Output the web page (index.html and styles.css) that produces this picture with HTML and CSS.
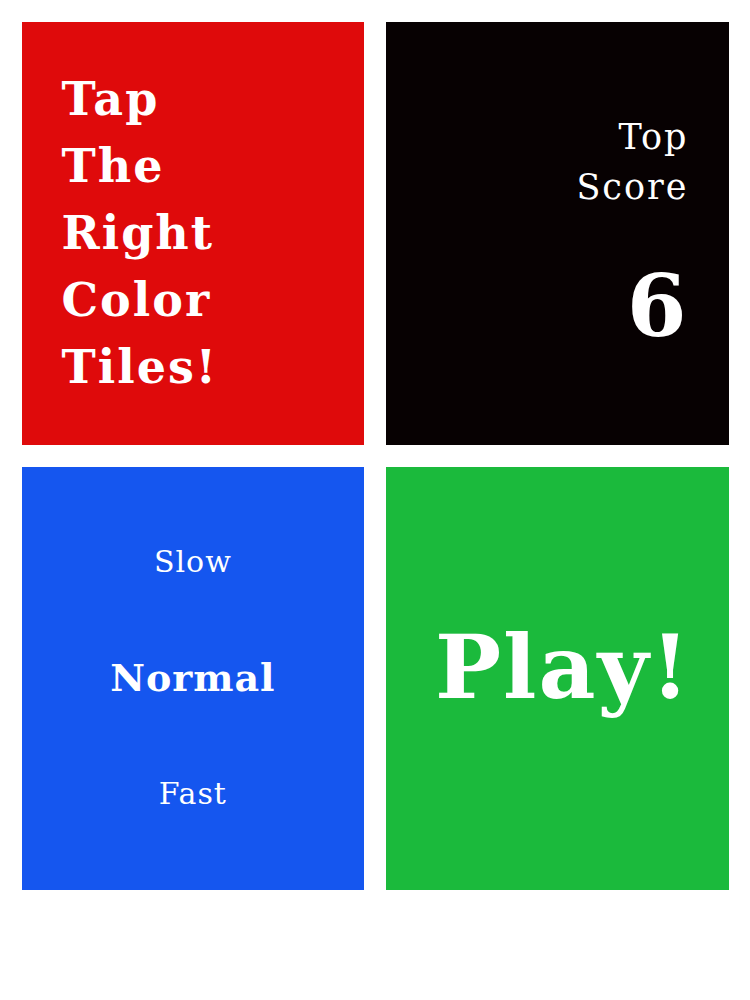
FILE: index.html
```html
<!DOCTYPE html>
<html lang="en">
<head>
<meta charset="utf-8">
<title>Tap The Right Color Tiles!</title>
<link rel="stylesheet" href="styles.css">
</head>
<body>
<main class="board">
  <section class="tile tile-red">
    <h1 class="title">Tap<br>The<br>Right<br>Color<br>Tiles!</h1>
  </section>
  <section class="tile tile-black">
    <div class="score-label">Top<br>Score</div>
    <div class="score-value">6</div>
  </section>
  <section class="tile tile-blue">
    <div class="speed">Slow</div>
    <div class="speed speed-active">Normal</div>
    <div class="speed">Fast</div>
  </section>
  <section class="tile tile-green">
    <div class="play">Play!</div>
  </section>
</main>
</body>
</html>
```

FILE: styles.css
```css
html, body {
  margin: 0;
  padding: 0;
  background: #ffffff;
}

body {
  font-family: "DejaVu Serif", "Liberation Serif", serif;
  color: #ffffff;
}

.board {
  display: grid;
  grid-template-columns: 342.75px 342.75px;
  grid-template-rows: 423.5px 423.5px;
  gap: 21.5px;
  padding: 21.5px;
}

.tile {
  display: flex;
  flex-direction: column;
  box-sizing: border-box;
}

.tile-red {
  background: #df0a0b;
  justify-content: center;
  padding-left: 40px;
}

.title {
  margin: 0;
  font-size: 46px;
  font-weight: bold;
  line-height: 67px;
  letter-spacing: 2px;
}

.tile-black {
  background: #070102;
  align-items: flex-end;
  padding: 90px 40px 0 0;
  text-align: right;
}

.score-label {
  font-size: 35px;
  line-height: 50px;
  letter-spacing: 2px;
}

.score-value {
  margin-top: 52px;
  margin-right: 2px;
  font-size: 86px;
  font-weight: bold;
  line-height: 84px;
}

.tile-blue {
  background: #1556ef;
  justify-content: center;
  align-items: center;
}

.speed {
  font-size: 30px;
  line-height: 116px;
  letter-spacing: 1px;
}

.speed-active {
  font-size: 38px;
  font-weight: bold;
}

.tile-green {
  background: #1bba3c;
  justify-content: center;
  align-items: center;
  padding-bottom: 22px;
}

.play {
  font-size: 88px;
  font-weight: bold;
  line-height: 1;
  letter-spacing: 2px;
  margin-left: 12px;
}
```
